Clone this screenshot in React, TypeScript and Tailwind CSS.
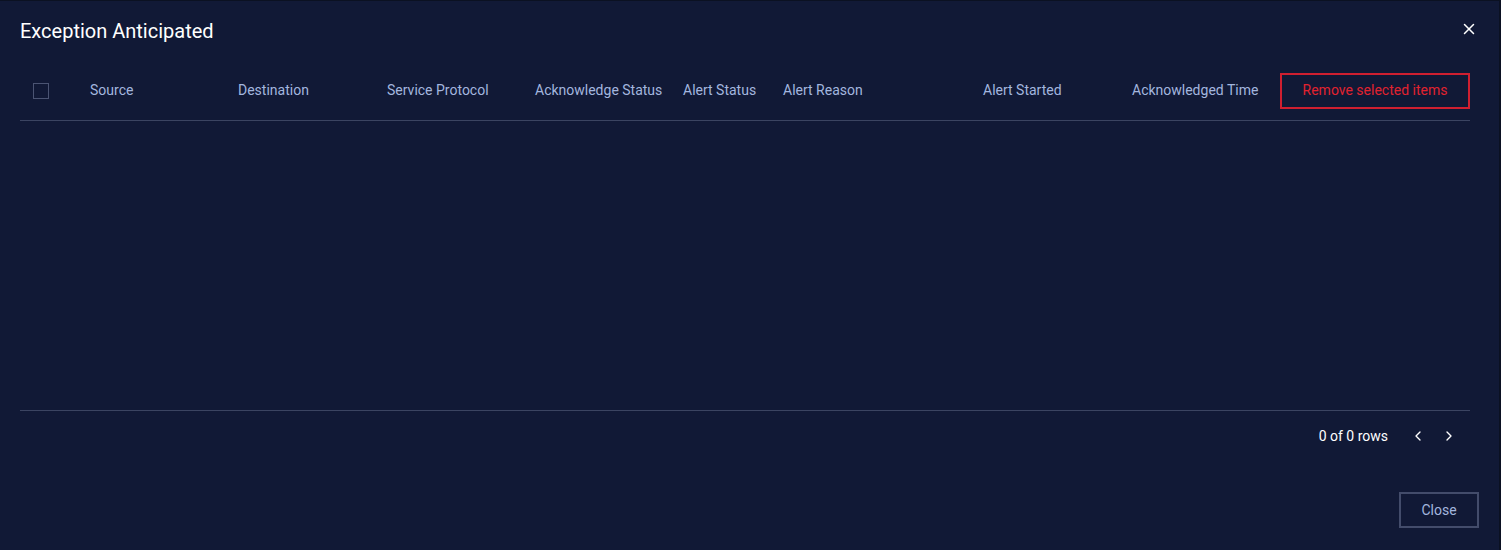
import React from "react";
import { X, ChevronLeft, ChevronRight } from "lucide-react";

const cols: { label: string; w: string }[] = [
  { label: "Source", w: "w-[148px]" },
  { label: "Destination", w: "w-[149px]" },
  { label: "Service Protocol", w: "w-[148px]" },
  { label: "Acknowledge Status", w: "w-[148px]" },
  { label: "Alert Status", w: "w-[100px]" },
  { label: "Alert Reason", w: "w-[200px]" },
  { label: "Alert Started", w: "w-[149px]" },
  { label: "Acknowledged Time", w: "w-[148px]" },
];

export default function App() {
  return (
    <div
      className="w-[1501px] h-[550px] bg-[#0b1122] flex overflow-hidden"
      style={{ fontFamily: "Roboto, 'Liberation Sans', sans-serif" }}
    >
      <div className="w-[1499px] h-[550px] mt-[1px] bg-[#111936] flex flex-col">
        <div className="flex items-center justify-between pl-[20px] pr-[21px] pt-[17px] h-[42px]">
          <h2 className="text-[20px] leading-[24px] text-white font-normal">Exception Anticipated</h2>
          <X size={18} strokeWidth={2} className="text-white mt-[-4px]" />
        </div>
        <div className="pl-[20px] pr-[29px] mt-[18px]">
          <div className="flex items-center h-[60px] border-b border-[#3b4461]">
            <div className="w-[70px] shrink-0 pl-[13px] flex items-center">
              <div className="w-[16px] h-[16px] border border-[#4b5473]" />
            </div>
            {cols.map((c) => (
              <div key={c.label} className={`${c.w} shrink-0 text-[14px] text-[#a3b6df] whitespace-nowrap`}>
                {c.label}
              </div>
            ))}
            <button className="w-[190px] shrink-0 h-[36px] border-2 border-[#d01f30] text-[#e2222f] text-[14px]">
              Remove selected items
            </button>
          </div>
          <div className="h-[290px] border-b border-[#3b4461]" />
          <div className="flex items-center justify-end h-[50px]">
            <span className="text-[14px] text-white mr-[22px]">0 of 0 rows</span>
            <ChevronLeft size={16} strokeWidth={2} className="text-white mr-[15px]" />
            <ChevronRight size={16} strokeWidth={2} className="text-white mr-[13px]" />
          </div>
        </div>
        <div className="flex justify-end pr-[20px] mt-[31px]">
          <button className="w-[80px] h-[36px] border-2 border-[#434c6b] text-[#a3b6df] text-[14px]">
            Close
          </button>
        </div>
      </div>
    </div>
  );
}
